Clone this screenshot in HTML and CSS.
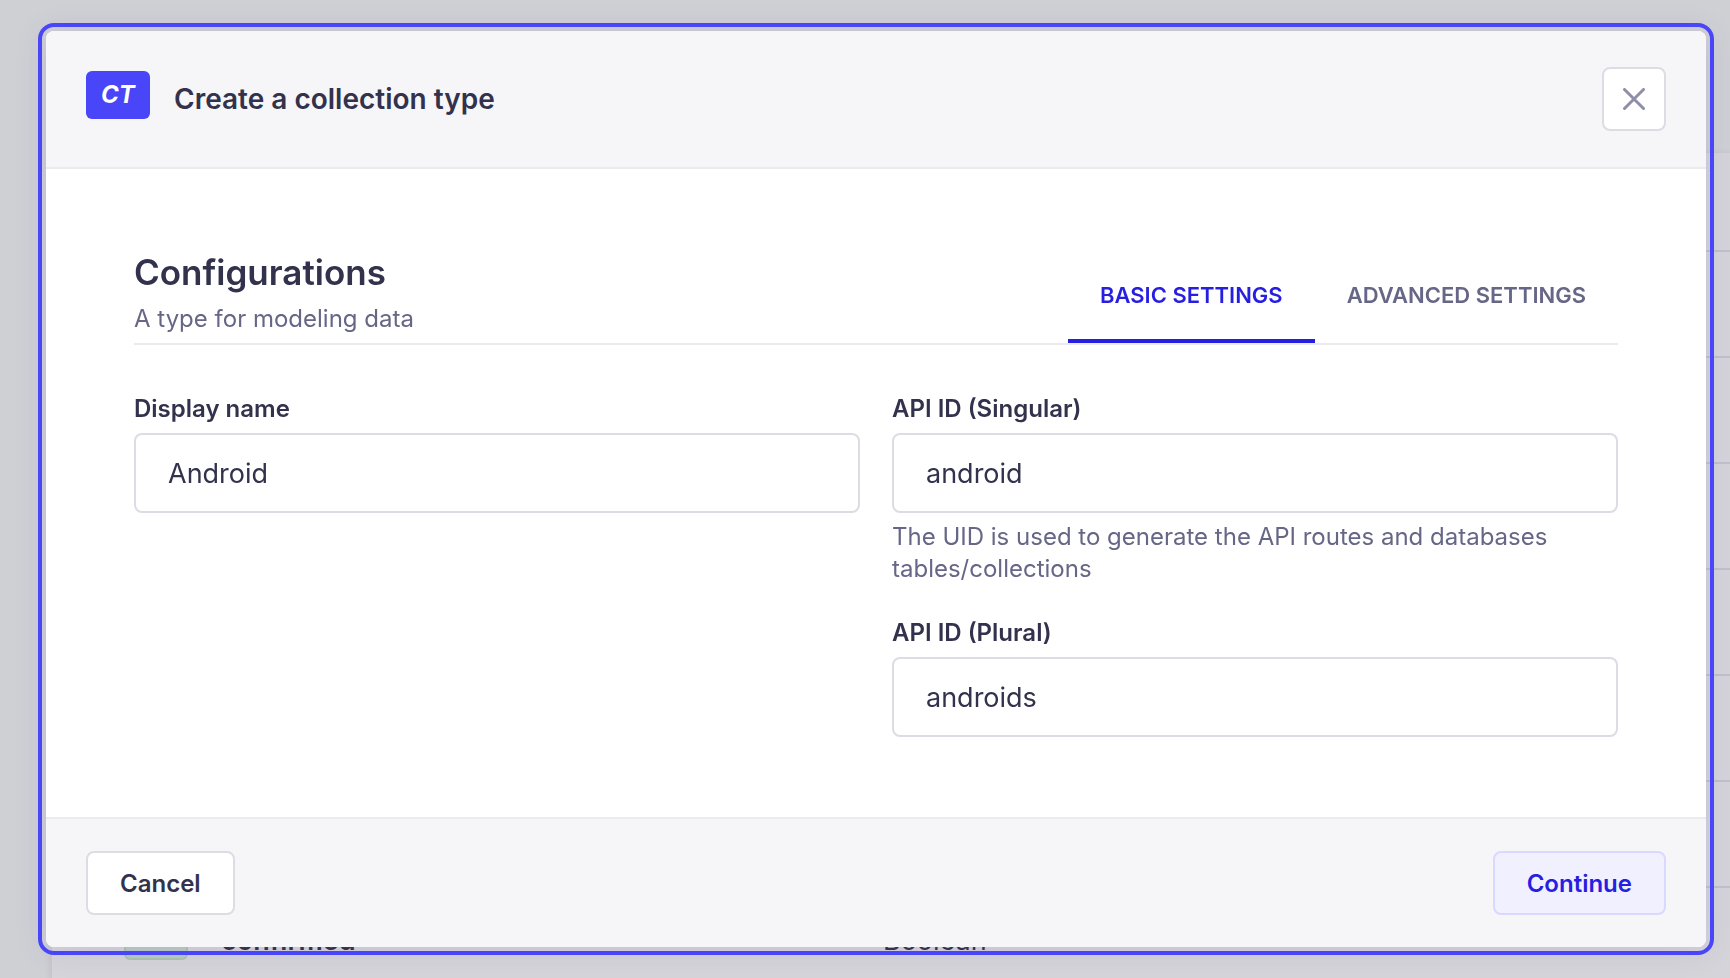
FILE: index.html
```html
<!DOCTYPE html>
<html lang="en">
<head>
<meta charset="utf-8">
<title>Create a collection type</title>
<link rel="stylesheet" href="styles.css">
</head>
<body>
<main class="page">
  <table class="fields">
    <thead><tr><th></th><th></th><th></th></tr></thead>
    <tbody>
      <tr><td></td><td></td><td></td></tr>
      <tr><td></td><td></td><td></td></tr>
      <tr><td></td><td></td><td></td></tr>
      <tr><td></td><td></td><td></td></tr>
      <tr><td></td><td></td><td></td></tr>
      <tr><td></td><td></td><td></td></tr>
      <tr>
        <td class="icon-cell"><span class="type-icon"></span></td>
        <td class="name-cell">confirmed</td>
        <td>Boolean</td>
      </tr>
    </tbody>
  </table>
</main>

<div class="overlay">
  <form class="modal" role="dialog" aria-labelledby="modal-title">
    <header class="modal-header">
      <span class="badge">CT</span>
      <h1 class="modal-title" id="modal-title">Create a collection type</h1>
      <button class="close" type="button" aria-label="Close">
        <svg class="close-icon" viewBox="0 0 22 22" aria-hidden="true"><path d="M1.5 1.5 20.500 20.500M20.500 1.500 1.500 20.500"/></svg>
      </button>
    </header>

    <div class="modal-body">
      <div class="section-head">
        <div class="section-text">
          <h2 class="section-title">Configurations</h2>
          <p class="section-sub">A type for modeling data</p>
        </div>
        <div class="tabs" role="tablist">
          <button class="tab tab-active" type="button" role="tab" aria-selected="true">BASIC SETTINGS</button>
          <button class="tab" type="button" role="tab" aria-selected="false">ADVANCED SETTINGS</button>
        </div>
      </div>

      <div class="form-grid">
        <div class="field">
          <label class="label" for="display-name">Display name</label>
          <input class="input" id="display-name" type="text" value="Android">
        </div>
        <div class="column">
          <div class="field">
            <label class="label" for="singular">API ID (Singular)</label>
            <input class="input" id="singular" type="text" value="android" aria-describedby="singular-hint">
            <p class="hint" id="singular-hint">The UID is used to generate the API routes and databases tables/collections</p>
          </div>
          <div class="field">
            <label class="label" for="plural">API ID (Plural)</label>
            <input class="input" id="plural" type="text" value="androids">
          </div>
        </div>
      </div>
    </div>

    <footer class="modal-footer">
      <button class="button" type="button">Cancel</button>
      <button class="button button-primary" type="submit">Continue</button>
    </footer>
  </form>
</div>
</body>
</html>
```

FILE: styles.css
```css
* {
  box-sizing: border-box;
}

body {
  margin: 0;
  height: 100vh;
  overflow: hidden;
  background: #cfd0d4;
  color: #32324d;
  font-family: Inter, "Liberation Sans", sans-serif;
}

h1,
h2,
p {
  margin: 0;
}

button,
input {
  font-family: inherit;
  color: inherit;
}

/* Content type table behind the dialog */
.page {
  height: 100vh;
  padding: 153px 0 0 52px;
  overflow: hidden;
}

.fields {
  width: 100%;
  border-collapse: separate;
  border-spacing: 0;
  table-layout: fixed;
  background: #d5d4d9;
  box-shadow: 0 2px 8px rgba(33, 33, 52, 0.1);
  font-size: 27px;
}

.fields th {
  height: 99px;
  padding: 0;
  border-bottom: 2px solid #c1c0ca;
}

.fields th:nth-child(1) {
  width: 169px;
}

.fields th:nth-child(2) {
  width: 662px;
}

.fields td {
  height: 106px;
  padding: 0;
  border-bottom: 2px solid #c1c0ca;
}

.fields .icon-cell {
  padding: 0 0 8px 72px;
}

.fields .name-cell {
  font-weight: 600;
}

.type-icon {
  display: block;
  width: 64px;
  height: 48px;
  border: 2px solid #a9c6ab;
  border-radius: 6px;
  background: #bccbbf;
}

/* Dialog */
.overlay {
  position: fixed;
  inset: 0;
  padding: 31px 24px 31px 46px;
}

.modal {
  display: flex;
  flex-direction: column;
  border-radius: 8px;
  outline: 4px solid #4945f8;
  outline-offset: 4px;
  background: #ffffff;
  box-shadow: 0 2px 32px rgba(80, 60, 190, 0.13);
}

.modal-header {
  display: flex;
  align-items: center;
  padding: 36px 40px;
  border-bottom: 2px solid #eaeaef;
  border-radius: 8px 8px 0 0;
  background: #f6f6f9;
}

.badge {
  width: 64px;
  margin-bottom: 8px;
  border-radius: 6px;
  background: #4945f8;
  color: #ffffff;
  font-size: 24px;
  font-style: italic;
  font-weight: 700;
  line-height: 48px;
  text-align: center;
}

.modal-title {
  flex: 1;
  margin-left: 24px;
  font-size: 28px;
  font-weight: 600;
  line-height: 36px;
}

.close {
  display: grid;
  place-items: center;
  width: 64px;
  height: 64px;
  padding: 0;
  border: 2px solid #dcdce4;
  border-radius: 8px;
  background: #ffffff;
}

.close-icon {
  width: 22px;
  height: 22px;
  fill: none;
  stroke: #8e8ea9;
  stroke-width: 3;
  stroke-linecap: round;
}

.modal-body {
  padding: 80px 88px;
}

.section-head {
  display: flex;
  align-items: flex-end;
  justify-content: space-between;
  border-bottom: 2px solid #eaeaef;
}

.section-text {
  padding-bottom: 8px;
}

.section-title {
  margin-bottom: 8px;
  font-size: 35px;
  font-weight: 600;
  line-height: 46px;
}

.section-sub {
  color: #666687;
  font-size: 24px;
  line-height: 32px;
}

.tabs {
  display: flex;
}

.tab {
  padding: 28px 32px;
  border: 0;
  border-bottom: 4px solid transparent;
  background: none;
  color: #666687;
  font-size: 22px;
  font-weight: 600;
  line-height: 32px;
}

.tab-active {
  border-bottom-color: #271fe0;
  color: #271fe0;
}

.form-grid {
  display: grid;
  grid-template-columns: 1fr 1fr;
  gap: 32px;
  align-items: start;
  padding-top: 48px;
}

.column {
  display: grid;
  gap: 32px;
}

.field {
  display: flex;
  flex-direction: column;
  gap: 8px;
}

.label {
  font-size: 24px;
  font-weight: 600;
  line-height: 32px;
}

.input {
  width: 100%;
  height: 80px;
  padding: 0 32px;
  border: 2px solid #dcdce4;
  border-radius: 8px;
  background: #ffffff;
  font-size: 27px;
}

.hint {
  color: #666687;
  font-size: 24px;
  line-height: 32px;
}

.modal-footer {
  display: flex;
  justify-content: space-between;
  padding: 32px 40px;
  border-top: 2px solid #eaeaef;
  border-radius: 0 0 8px 8px;
  background: #f6f6f9;
}

.button {
  height: 64px;
  padding: 0 32px;
  border: 2px solid #dcdce4;
  border-radius: 8px;
  background: #ffffff;
  font-size: 24px;
  font-weight: 600;
}

.button-primary {
  border-color: #d9d8ff;
  background: #f0f0ff;
  color: #271fe0;
}
```
